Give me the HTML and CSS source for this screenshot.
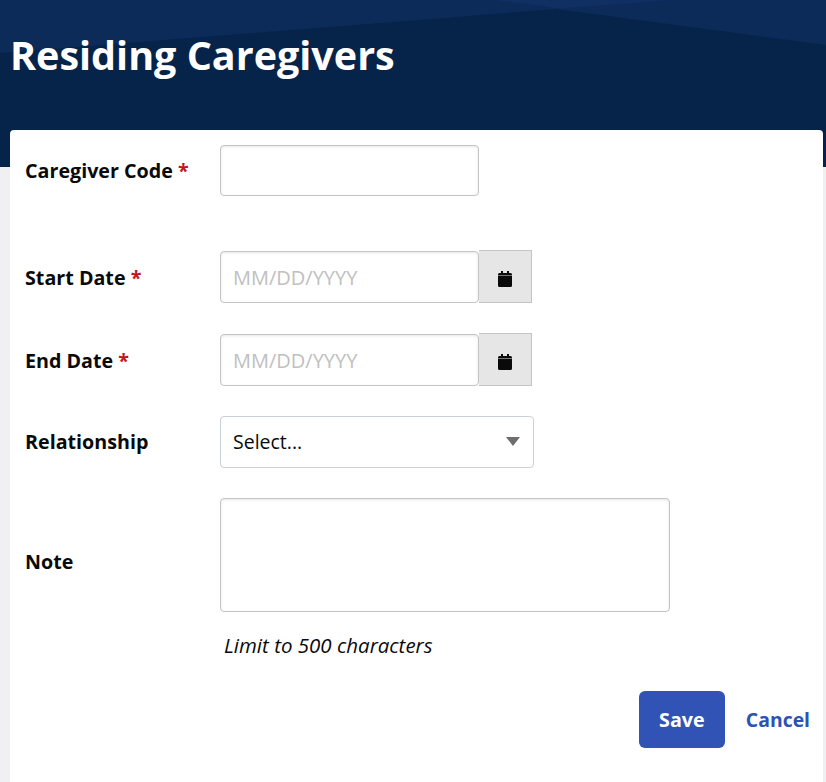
FILE: index.html
```html
<!DOCTYPE html>
<html lang="en">
  <head>
    <meta charset="UTF-8" />
    <meta name="viewport" content="width=device-width, initial-scale=1.0" />
    <title>Residing Caregivers</title>
    <link rel="stylesheet" href="styles.css">
  </head>
  <body>
    <header class="banner">
      <svg class="banner-bg" viewBox="0 0 826 167" preserveAspectRatio="none" aria-hidden="true">
        <polygon points="0,0 826,0 826,45 556,9 0,53" fill="#0d2b59" />
        <polygon points="496,0 673,0 560,8.500" fill="#102f63" />
      </svg>
      <h1 class="page-title">Residing Caregivers</h1>
    </header>

    <main class="card">
      <form class="form">
        <div class="row row-code">
          <label class="label">Caregiver Code <span class="req">*</span></label>
          <input class="input" type="text" />
        </div>

        <div class="row row-start">
          <label class="label label-date">Start Date <span class="req">*</span></label>
          <div class="date-group">
            <input class="input input-date" type="text" placeholder="MM/DD/YYYY" />
            <span class="date-btn">
              <svg class="cal-icon" viewBox="0 0 14 16"><path d="M3 0h2v2h4V0h2v2h1.500A1.500 1.500 0 0 1 14 3.500V4.400H0V3.500A1.500 1.500 0 0 1 1.500 2H3zM0 5h14v9.500a1.500 1.500 0 0 1-1.500 1.500h-11A1.500 1.500 0 0 1 0 14.500z" /></svg>
            </span>
          </div>
        </div>

        <div class="row row-end">
          <label class="label label-date">End Date <span class="req">*</span></label>
          <div class="date-group">
            <input class="input input-date" type="text" placeholder="MM/DD/YYYY" />
            <span class="date-btn">
              <svg class="cal-icon" viewBox="0 0 14 16"><path d="M3 0h2v2h4V0h2v2h1.500A1.500 1.500 0 0 1 14 3.500V4.400H0V3.500A1.500 1.500 0 0 1 1.500 2H3zM0 5h14v9.500a1.500 1.500 0 0 1-1.500 1.500h-11A1.500 1.500 0 0 1 0 14.500z" /></svg>
            </span>
          </div>
        </div>

        <div class="row row-rel">
          <label class="label">Relationship</label>
          <div class="select">
            <span class="select-text">Select...</span>
            <span class="caret"></span>
          </div>
        </div>

        <div class="row row-note">
          <label class="label label-note">Note</label>
          <textarea class="textarea"></textarea>
        </div>
        <p class="hint">Limit to 500 characters</p>

        <div class="actions">
          <button class="save-btn" type="button">Save</button>
          <a class="cancel-link" href="#">Cancel</a>
        </div>
      </form>
    </main>
  </body>
</html>
```

FILE: styles.css
```css
* {
  box-sizing: border-box;
}

html,
body {
  height: 100%;
}

body {
  margin: 0;
  overflow: hidden;
  background-color: #f0f0f3;
  font-family: "Open Sans", "Noto Sans", Arial, sans-serif;
  color: #0a0a0a;
}

.banner {
  position: relative;
  height: 167px;
  padding: 30px 10px 0;
  background-color: #06234a;
}

.banner-bg {
  position: absolute;
  top: 0;
  left: 0;
  width: 100%;
  height: 100%;
}

.page-title {
  position: relative;
  margin: 0;
  font-size: 39.500px;
  line-height: 50px;
  font-weight: 700;
  color: #fff;
}

.card {
  position: relative;
  height: 652px;
  margin: -37px 3px 0 10px;
  padding: 15px 15px 0;
  background-color: #fff;
  border-radius: 4px 4px 0 0;
}

.row {
  display: flex;
  align-items: center;
}

.row-start {
  margin-top: 54px;
}

.row-end,
.row-rel,
.row-note {
  margin-top: 30px;
}

.label {
  width: 195px;
  flex-shrink: 0;
  font-size: 19.700px;
  font-weight: 700;
  line-height: 24px;
}

.label-date {
  padding-top: 2px;
}

.label-note {
  padding-top: 14px;
}

.req {
  color: #c4161c;
}

.input {
  display: block;
  width: 259px;
  height: 51px;
  padding: 0 12px;
  border: 1px solid #c4c4c4;
  border-radius: 4px;
  background-color: #fff;
  box-shadow: inset 0 1px 3px rgba(0, 0, 0, 0.1);
  font-family: inherit;
  font-size: 20px;
  outline: none;
}

.input-date {
  height: 52px;
}

.input::placeholder {
  color: #c0c0c0;
  opacity: 1;
}

.date-group {
  display: flex;
  align-items: flex-end;
}

.date-btn {
  display: flex;
  align-items: center;
  justify-content: center;
  width: 53px;
  height: 53px;
  padding-top: 5px;
  border: 1px solid #c4c4c4;
  border-left: none;
  background-color: #e6e6e6;
}

.cal-icon {
  width: 14px;
  height: 16px;
  fill: #0a0a0a;
}

.select {
  display: flex;
  align-items: center;
  justify-content: space-between;
  width: 314px;
  height: 52px;
  padding: 0 13px 0 12px;
  border: 1px solid #cbd0d6;
  border-radius: 4px;
  font-size: 19.500px;
}

.select-text {
  margin-top: -2px;
}

.caret {
  width: 0;
  height: 0;
  margin-top: -2px;
  border-left: 7px solid transparent;
  border-right: 7px solid transparent;
  border-top: 9px solid #6e6e6e;
}

.textarea {
  display: block;
  width: 450px;
  height: 114px;
  border: 1px solid #c4c4c4;
  border-radius: 4px;
  box-shadow: inset 0 1px 3px rgba(0, 0, 0, 0.1);
  resize: none;
  outline: none;
}

.hint {
  margin: 20px 0 0 199px;
  font-size: 20.500px;
  line-height: 26px;
  font-style: italic;
}

.actions {
  display: flex;
  align-items: center;
  justify-content: flex-end;
  gap: 21px;
  margin-top: 33px;
}

.save-btn {
  width: 86px;
  height: 57px;
  border: none;
  border-radius: 6px;
  background-color: #3053b5;
  color: #fff;
  font-family: inherit;
  font-size: 19.700px;
  font-weight: 700;
}

.cancel-link {
  margin-right: -2px;
  color: #2c52b3;
  font-size: 19.400px;
  font-weight: 700;
  text-decoration: none;
}
```
